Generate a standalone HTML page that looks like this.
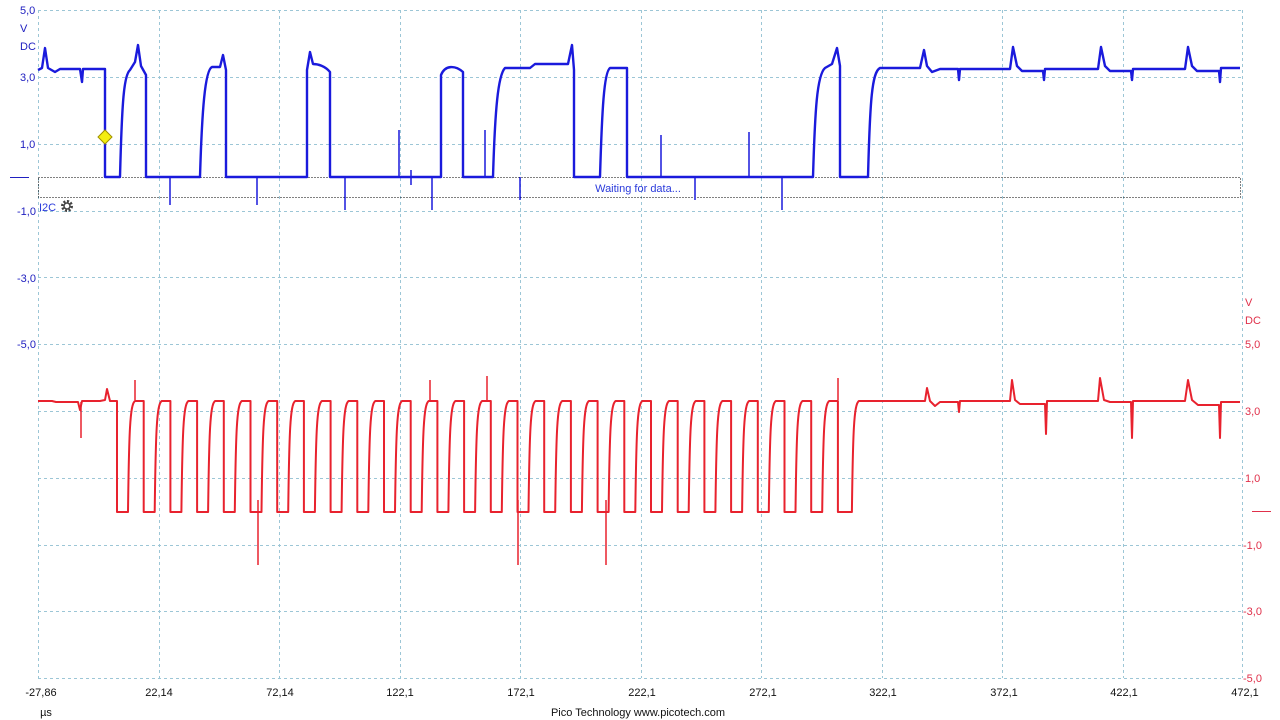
<!DOCTYPE html>
<html><head><meta charset="utf-8"><style>
html,body{margin:0;padding:0;background:#fff;width:1280px;height:720px;overflow:hidden}
svg{display:block;font-family:"Liberation Sans",sans-serif;font-size:11px}
</style></head><body>
<svg width="1280" height="720" viewBox="0 0 1280 720">
<g stroke="#9cc6d6" stroke-width="1" stroke-dasharray="3,3" fill="none">
<path d="M38.5,10V678M159.5,10V678M279.5,10V678M400.5,10V678M520.5,10V678M641.5,10V678M761.5,10V678M882.5,10V678M1002.5,10V678M1123.5,10V678M1242.5,10V678"/>
<path d="M38,10.5H1242M38,77.5H1242M38,144.5H1242M38,211.5H1242M38,277.5H1242M38,344.5H1242M38,411.5H1242M38,478.5H1242M38,545.5H1242M38,611.5H1242M38,678.5H1242"/>
</g>
<g fill="#2020c0">
<text x="20" y="14">5,0</text><text x="20" y="32">V</text><text x="20" y="50">DC</text>
<text x="20" y="81">3,0</text><text x="20" y="148">1,0</text><text x="17" y="215">-1,0</text>
<text x="17" y="282">-3,0</text><text x="17" y="348">-5,0</text>
</g>
<line x1="10" y1="177.5" x2="29" y2="177.5" stroke="#2020c0"/>
<g fill="#e0304a">
<text x="1245" y="306">V</text><text x="1245" y="324">DC</text>
<text x="1245" y="348">5,0</text><text x="1245" y="415">3,0</text><text x="1245" y="482">1,0</text>
<text x="1243" y="549">-1,0</text><text x="1243" y="615">-3,0</text><text x="1243" y="682">-5,0</text>
</g>
<line x1="1252" y1="511.5" x2="1271" y2="511.5" stroke="#e0304a"/>
<rect x="38.5" y="177.5" width="1202" height="20" fill="none" stroke="#000" stroke-dasharray="1,2"/>
<text x="638" y="192" fill="#2a3adb" text-anchor="middle">Waiting for data...</text>
<text x="39" y="211" fill="#2a3adb">I2C</text>
<g transform="translate(67,206)"><circle r="4.5" fill="none" stroke="#444" stroke-width="3" stroke-dasharray="2,1.5"/><circle r="3" fill="none" stroke="#444" stroke-width="1.5"/></g>
<path fill="none" stroke="#e8222e" stroke-width="2" stroke-linejoin="round" d="M38,401 H52 L56,402 H78 L80,410 L82,401 H100 L105,400 L107,389 L110,401 H117
v111 h11 c1,-80 2,-108 7,-111 h8.7 v111 h11 c1,-80 2,-108 7,-111 h8.7 v111 h11 c1,-80 2,-108 7,-111 h8.7 v111 h11 c1,-80 2,-108 7,-111 h8.7
v111 h11 c1,-80 2,-108 7,-111 h8.7 v111 h11 c1,-80 2,-108 7,-111 h8.7 v111 h11 c1,-80 2,-108 7,-111 h8.7 v111 h11 c1,-80 2,-108 7,-111 h8.7
v111 h11 c1,-80 2,-108 7,-111 h8.7 v111 h11 c1,-80 2,-108 7,-111 h8.7 v111 h11 c1,-80 2,-108 7,-111 h8.7 v111 h11 c1,-80 2,-108 7,-111 h8.7
v111 h11 c1,-80 2,-108 7,-111 h8.7 v111 h11 c1,-80 2,-108 7,-111 h8.7 v111 h11 c1,-80 2,-108 7,-111 h8.7 v111 h11 c1,-80 2,-108 7,-111 h8.7
v111 h11 c1,-80 2,-108 7,-111 h8.7 v111 h11 c1,-80 2,-108 7,-111 h8.7 v111 h11 c1,-80 2,-108 7,-111 h8.7 v111 h11 c1,-80 2,-108 7,-111 h8.7
v111 h11 c1,-80 2,-108 7,-111 h8.7 v111 h11 c1,-80 2,-108 7,-111 h8.7 v111 h11 c1,-80 2,-108 7,-111 h8.7 v111 h11 c1,-80 2,-108 7,-111 h8.7
v111 h11 c1,-80 2,-108 7,-111 h8.7 v111 h11 c1,-80 2,-108 7,-111 h8.7 v111 h11 c1,-80 2,-108 7,-111 h8.7
v111 h14 c1,-80 2,-108 7,-111 H925 L927,388 L930,401 L935,406 L940,402 H958 L959,412 L960,401 H1010 L1012,380 L1015,400 L1020,404 H1045 L1046,434 L1047,401 H1098 L1100,378 L1104,400 L1110,402 H1131 L1132,438 L1133,401 H1185 L1188,380 L1192,400 L1198,405 H1219 L1220,438 L1221,402 H1240"/>
<path fill="none" stroke="#e8222e" stroke-width="1.5" d="M81,402V438M135,380V400M258,500V565M518,500V565M606,500V565M487,376V400M430,380V400M838,378V400"/>
<path fill="none" stroke="#1a1adc" stroke-width="2.4" stroke-linejoin="round" d="M38,70 L42,68 L45,48 L48,68 L55,72 L60,69 H80 L82,82 L83,69 H105 V177 H120 C122,100 124,75 130,70 L135,62 L138,45 L141,66 L146,75 V177 H200 C202,110 205,70 212,67 H220 L223,55 L226,70 V177 H307 V70 L310,52 L313,64 C318,64 325,66 330,72 V177 H441 V75 C445,65 455,65 463,72 V177 H493 C495,110 498,75 505,68 H530 L535,64 H568 L572,45 L574,70 V177 H600 C602,110 604,72 610,68 H627 V177 H813 C815,110 817,75 825,68 L832,64 L837,48 L840,66 V177 H868 C870,100 872,72 880,68 H920 L924,50 L927,66 L932,72 L940,69 H958 L959,80 L960,69 H1010 L1013,47 L1017,66 L1022,71 H1043 L1044,80 L1045,69 H1098 L1101,47 L1105,66 L1110,71 H1131 L1132,80 L1133,69 H1185 L1188,47 L1192,66 L1197,71 H1219 L1220,82 L1221,68 H1240"/>
<path fill="none" stroke="#1a1adc" stroke-width="1.5" d="M170,177V205M257,177V205M345,177V210M432,177V210M520,177V200M695,177V200M782,177V210M399,177V130M485,177V130M661,177V135M749,177V132M411,170V185"/>
<path d="M105,130 L112,137 L105,144 L98,137Z" fill="#f4ee10" stroke="#a09000" stroke-width="1"/>
<g fill="#111" text-anchor="middle">
<text x="41" y="696">-27,86</text><text x="159" y="696">22,14</text><text x="280" y="696">72,14</text>
<text x="400" y="696">122,1</text><text x="521" y="696">172,1</text><text x="642" y="696">222,1</text>
<text x="763" y="696">272,1</text><text x="883" y="696">322,1</text><text x="1004" y="696">372,1</text>
<text x="1124" y="696">422,1</text><text x="1245" y="696">472,1</text>
<text x="46" y="716">µs</text>
<text x="638" y="716">Pico Technology   www.picotech.com</text>
</g>
</svg>
</body></html>
